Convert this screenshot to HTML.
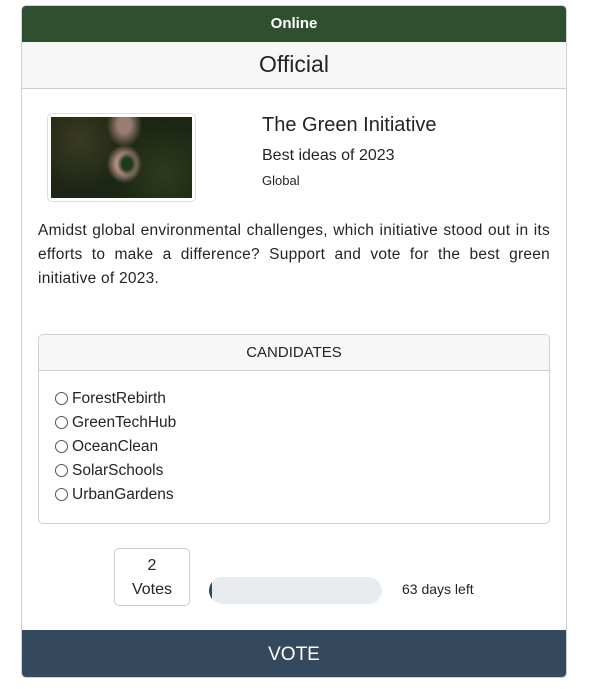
<!DOCTYPE html>
<html><head><style>
*{margin:0;padding:0;box-sizing:border-box}
body{width:589px;height:689px;background:#fff;font-family:"Liberation Sans",sans-serif;color:#212529;position:relative}
.card{position:absolute;left:21px;top:5px;width:546px;height:673px;border:1px solid #d0d0d0;border-radius:5px;overflow:hidden}
.hd{height:36px;background:#2f4f2f;color:#fff;text-align:center;font-size:15px;line-height:36px;font-weight:bold}
.off{height:47px;background:#f7f7f7;border-bottom:1px solid #ccc;text-align:center;font-size:23px;line-height:45px}
.abs{position:absolute}
.img{left:25px;top:107px;width:149px;height:89px;border:1px solid #ddd;border-radius:5px;padding:3px}
.img div{width:100%;height:100%;background:radial-gradient(ellipse 10px 12px at 54% 58%,#1d3a1a 50%,transparent 100%),radial-gradient(ellipse 22px 24px at 52% 58%,#b08c80 40%,transparent 80%),radial-gradient(ellipse 22px 28px at 52% 10%,#9a7c70 30%,transparent 80%),radial-gradient(circle at 20% 30%,#3a3a20,transparent 40%),radial-gradient(circle at 80% 70%,#2e3a1c,transparent 40%),#1c2614}
p.t{left:16px;top:213px;width:512px;font-size:15.5px;letter-spacing:0.25px;line-height:24px;text-align:justify}
.cand{left:16px;top:328px;width:512px;height:190px;border:1px solid #d0d0d0;border-radius:5px;overflow:hidden}
.cand .h{height:36px;background:#f7f7f7;border-bottom:1px solid #d0d0d0;text-align:center;line-height:36px;font-size:15px}
.cand ul{list-style:none;padding:16px 0 0 16px}
.cand li{height:24px;font-size:15.5px;line-height:20px;display:flex;align-items:center}
.cand li i{display:inline-block;width:13px;height:13px;border:1px solid #555;border-radius:50%;margin-right:4px;margin-top:-2px}
.votes{left:92px;top:542px;width:76px;height:58px;border:1px solid #ccc;border-radius:5px;text-align:center;font-size:16px;line-height:24px;padding-top:5px}
.bar{left:187px;top:571px;width:173px;height:27px;background:#e9ecef;border-radius:14px;overflow:hidden}
.bar div{width:3px;height:100%;background:#34495e}
.vote{left:0;bottom:0;width:100%;height:47px;background:#34495e;color:#fff;text-align:center;font-size:19px;line-height:49px}
</style></head><body>
<div class="card">
<div class="hd">Online</div>
<div class="off">Official</div>
<div class="abs img"><div></div></div>
<div class="abs" style="left:240px;top:108px;font-size:20px">The Green Initiative</div>
<div class="abs" style="left:240px;top:141px;font-size:16px">Best ideas of 2023</div>
<div class="abs" style="left:240px;top:167px;font-size:13px">Global</div>
<p class="abs t">Amidst global environmental challenges, which initiative stood out in its efforts to make a difference? Support and vote for the best green initiative of 2023.</p>
<div class="abs cand"><div class="h">CANDIDATES</div>
<ul><li><i></i>ForestRebirth</li><li><i></i>GreenTechHub</li><li><i></i>OceanClean</li><li><i></i>SolarSchools</li><li><i></i>UrbanGardens</li></ul></div>
<div class="abs votes">2<br>Votes</div>
<div class="abs bar"><div></div></div>
<div class="abs" style="left:380px;top:575px;font-size:14px">63 days left</div>
<div class="abs vote">VOTE</div>
</div>
</body></html>
